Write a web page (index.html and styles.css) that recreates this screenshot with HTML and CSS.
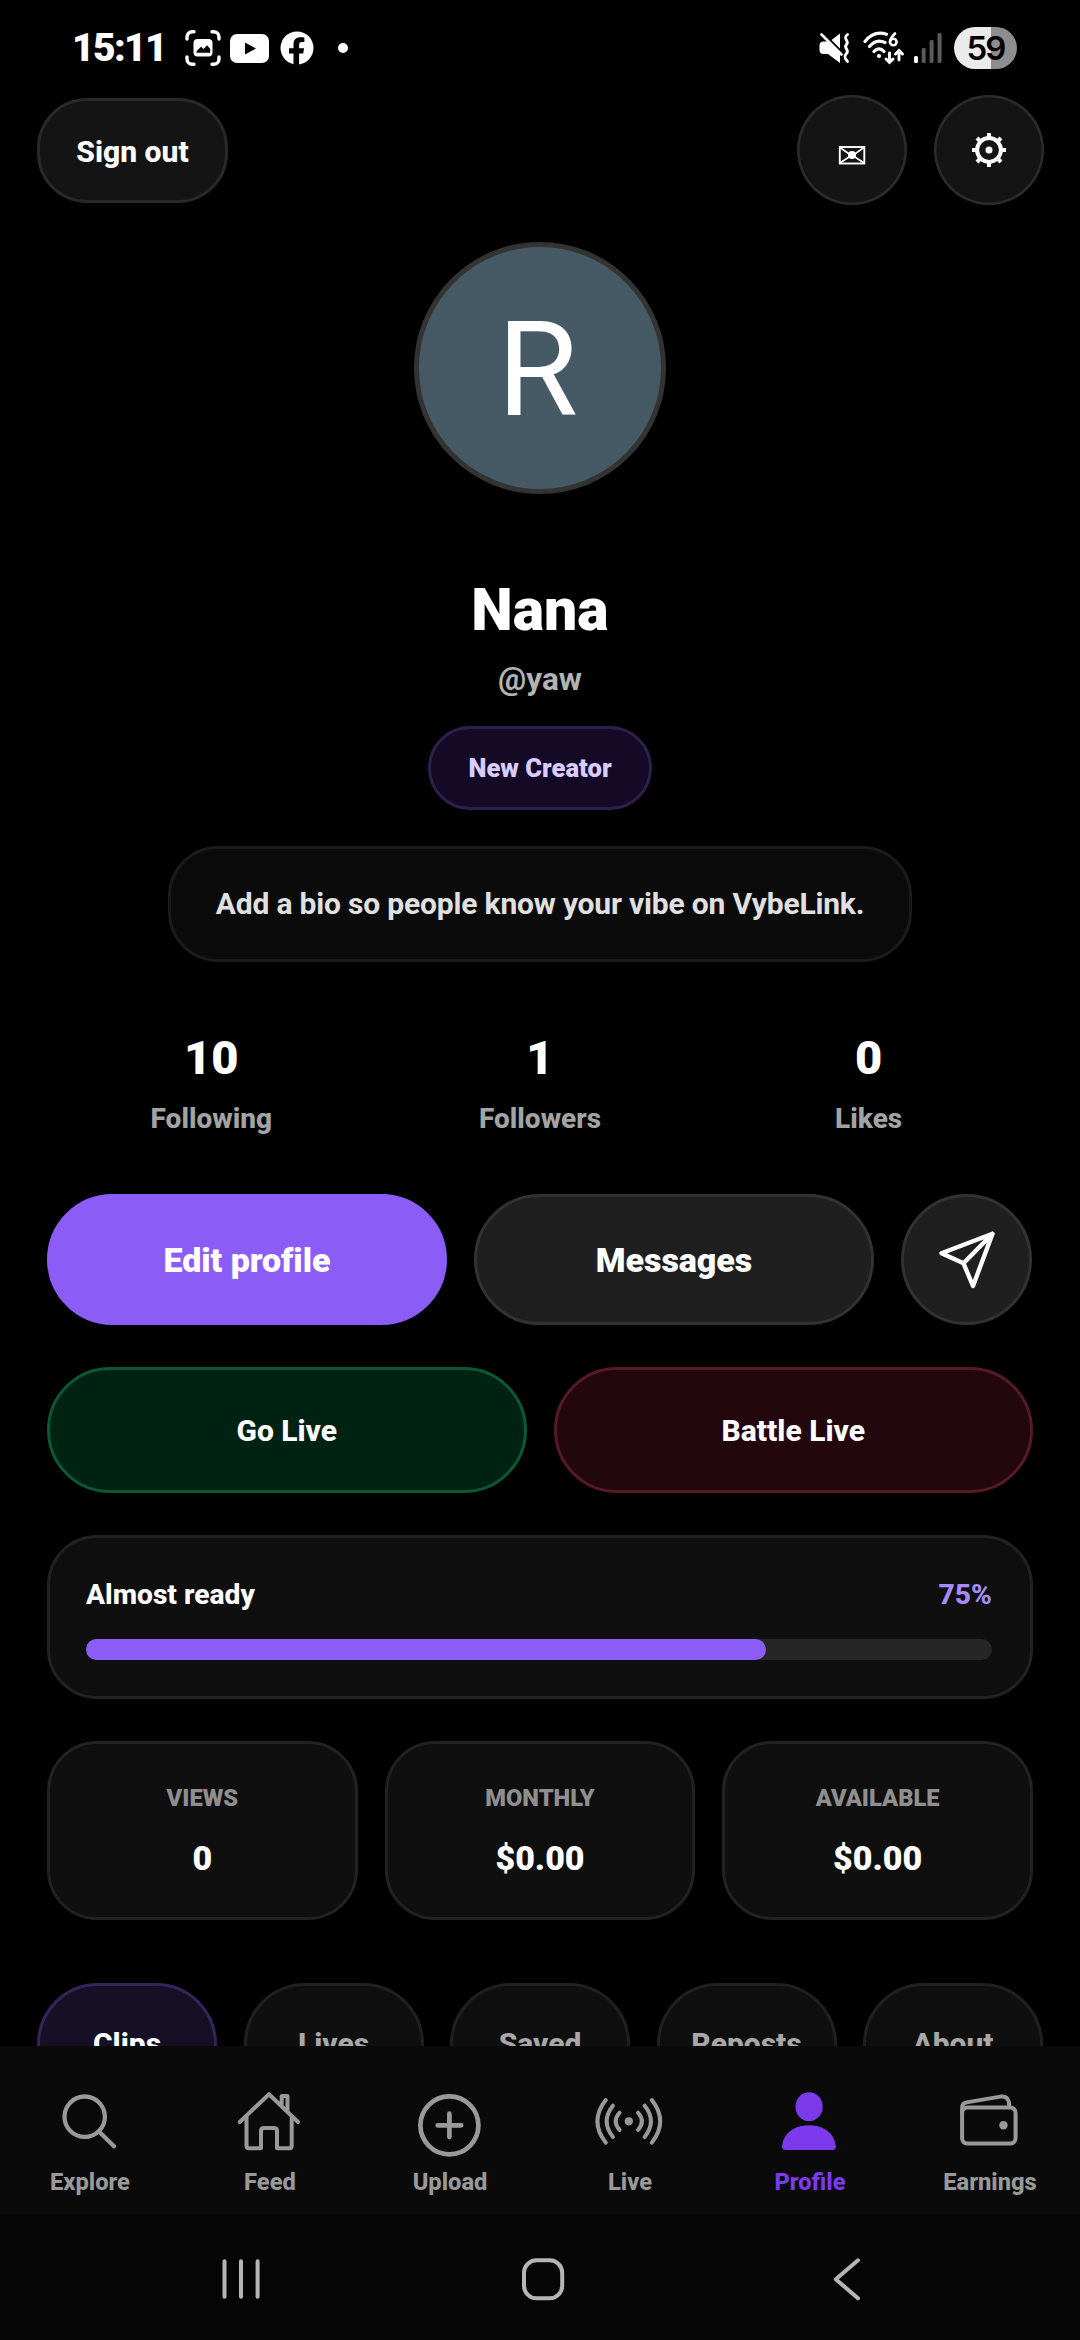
FILE: index.html
```html
<!DOCTYPE html>
<html lang="en">
<head>
<meta charset="utf-8">
<title>VybeLink – Profile</title>
<link rel="stylesheet" href="styles.css">
</head>
<body>
<div class="screen">
  <div class="status">
    <div class="status-left">
      <span class="clock">15:11</span>
      <svg class="ic-shot" width="36" height="36" viewBox="0 0 36 36" fill="none" stroke="#fff" stroke-width="3.4" stroke-linecap="round"><path d="M2 9V7a5.300 5.300 0 0 1 5.300-5.300H9M27 1.700h1.700A5.300 5.300 0 0 1 34 7v2M34 27v2a5.300 5.300 0 0 1-5.300 5.300H27M9 34.300H7.300A5.300 5.300 0 0 1 2 29v-2"/><rect x="8.500" y="9" width="19" height="17.500" rx="4" fill="#fff" stroke="none"/><path d="M11.500 22.800v-1.500l4.500-4.500 2.500 2.300 3.700-3.900 3 3.800v3.800z" fill="#000" stroke="none"/></svg>
      <svg class="ic-yt" width="39" height="29" viewBox="0 0 39 29"><rect width="39" height="29" rx="7" fill="#fff"/><path d="M15 8.500 26 14.500 15 20.500z" fill="#000"/></svg>
      <svg class="ic-fb" width="34" height="34" viewBox="0 0 34 34"><circle cx="17" cy="17" r="16.500" fill="#fff"/><path d="M13.500 35V22.500H9V17.200h4.500v-3.700c0-5 2.800-7.300 7-7.300 1.500 0 2.700.1 3.900.3v4.400h-2.300c-2.300 0-3 1.100-3 2.800v3.500h5l-.9 5.300h-4.100V35z" fill="#000"/></svg>
      <span class="dot"></span>
    </div>
    <div class="status-right">
      <svg class="ic-mute" width="32" height="32" viewBox="0 0 32 32" fill="none"><path d="M.500 13.500a4 4 0 0 1 4-4h5L21 20.500v10.500L9 22H4.500a4 4 0 0 1-4-4zM21 1.500v15L12.500 8z" fill="#fff"/><path d="M2.500 2.500 22.500 22.500" stroke="#fff" stroke-width="2.600" stroke-linecap="round"/><path d="M28.500 2.500C23 7 31 9 27.500 12.500S31 18 27.500 21.500 27 27 28.500 29.500" stroke="#fff" stroke-width="2.900" stroke-linecap="round"/></svg>
      <svg class="ic-wifi" width="42" height="34" viewBox="0 0 42 34" fill="none" stroke="#fff" stroke-width="3.200" stroke-linecap="round"><path d="M2 10.500C8 3 16 .800 23.500 3.300M6.500 15.500c4-5 9.500-6.800 15.500-4M11 20.500c3-3.500 7-3.500 10 0"/><circle cx="16" cy="25" r="2.100" fill="#fff" stroke="none"/><path d="M32 2.500c-3 3-5 5.500-5 8.500" stroke-width="2.600"/><circle cx="30.300" cy="11" r="3.300" stroke-width="2.600"/><path d="M26.500 22v9M23 28l3.500 3.500L30 28M36 29v-9M32.500 23 36 19.500l3.500 3.500" stroke-width="2.900"/></svg>
      <svg class="ic-signal" width="28" height="30" viewBox="0 0 28 30"><rect y="23" width="4" height="7" rx="1.500" fill="#fff"/><g fill="#5a5a5a"><rect x="7.700" y="15" width="4" height="15" rx="1.500"/><rect x="15.600" y="7" width="4" height="23" rx="1.500"/><rect x="23.600" width="4" height="30" rx="1.500"/></g></svg>
      <span class="battery">59</span>
    </div>
  </div>

  <main class="content">
    <header class="top">
      <div class="btn signout">Sign out</div>
      <div class="top-actions">
        <div class="round"><svg width="110" height="110" viewBox="0 0 110 110" fill="none" stroke="#fff"><rect x="42.800" y="52" width="24.500" height="16.500" stroke-width="1.900"/><path d="m43 52.500 12 8.500 12-8.500M43 68l12-8 12 8" stroke-width="1.700"/><circle cx="55" cy="60" r="4" fill="#fff" stroke="none"/></svg></div>
        <div class="round"><svg width="110" height="110" viewBox="0 0 110 110" fill="none" stroke="#fff" stroke-width="4"><circle cx="55" cy="55" r="11.900"/><circle cx="55" cy="55" r="3.500" fill="#fff" stroke="none"/><path d="M55 42v-4M55 68v4M42 55h-4M68 55h4M46 46l-3-3M64 46l3-3M46 64l-3 3M64 64l3 3"/></svg></div>
      </div>
    </header>

    <section class="identity">
      <div class="avatar">R</div>
      <h1 class="name">Nana</h1>
      <div class="handle">@yaw</div>
      <div class="badge">New Creator</div>
      <div class="bio">Add a bio so people know your vibe on VybeLink.</div>
    </section>

    <section class="stats">
      <div><b>10</b><span>Following</span></div>
      <div><b>1</b><span>Followers</span></div>
      <div><b>0</b><span>Likes</span></div>
    </section>

    <section class="actions">
      <div class="btn primary">Edit profile</div>
      <div class="btn grey">Messages</div>
      <div class="btn grey send"><svg width="60" height="60" viewBox="0 0 60 60" fill="none" stroke="#fff" stroke-width="4.400" stroke-linejoin="round" stroke-linecap="round"><path d="M55.500 3.800 4.500 23.200 26.500 33.300 36 56zM26.500 33.300l29-29.500"/></svg></div>
    </section>

    <section class="lives">
      <div class="btn golive">Go Live</div>
      <div class="btn battle">Battle Live</div>
    </section>

    <section class="card progress">
      <div class="progress-head"><span>Almost ready</span><span class="pct">75%</span></div>
      <div class="track"><div class="fill" style="width:75%"></div></div>
    </section>

    <section class="metrics">
      <div class="card metric"><span>VIEWS</span><b>0</b></div>
      <div class="card metric"><span>MONTHLY</span><b>$0.00</b></div>
      <div class="card metric"><span>AVAILABLE</span><b>$0.00</b></div>
    </section>

    <section class="tabs">
      <div class="tab active">Clips</div>
      <div class="tab">Lives</div>
      <div class="tab">Saved</div>
      <div class="tab">Reposts</div>
      <div class="tab">About</div>
    </section>
  </main>

  <nav class="nav">
    <div class="item"><svg viewBox="0 0 72 76" stroke-width="4.300"><circle cx="30.700" cy="32.700" r="20.200"/><path d="M45.200 47.700 60 62.300"/></svg>Explore</div>
    <div class="item"><svg viewBox="0 0 72 76" stroke-width="4"><path d="M5.800 38 35 10.200 64 38M12.500 32.500v29.300q0 2.500 2.500 2.500h12V47q0-3 3-3h10q3 0 3 3v17.300h12.200q2.500 0 2.500-2.500V32.500M47.700 20V12h5.800v15"/></svg>Feed</div>
    <div class="item"><svg viewBox="0 0 72 76" stroke-width="4.700"><circle cx="35.400" cy="41.300" r="29"/><path d="M23.700 41.300h23.500M35.400 29.500v23.600"/></svg>Upload</div>
    <div class="item"><svg viewBox="0 0 72 76" stroke-width="4"><circle cx="34.800" cy="37.300" r="4.100" fill="currentColor" stroke="none"/><path d="M57.900 16q16.600 21.300 0 42.600M50.700 21.700q12.500 15.600 0 31.200M44.100 28.700q7.600 8.600 0 17.200M11.700 16q-16.600 21.300 0 42.600M18.900 21.700q-12.500 15.600 0 31.200M25.500 28.700q-7.600 8.600 0 17.200"/></svg>Live</div>
    <div class="item active"><svg viewBox="0 0 72 76"><g fill="currentColor" stroke="none"><ellipse cx="35.100" cy="22.700" rx="13.600" ry="14.400"/><path d="M8 62.500C9 49.500 20 41.200 35 41.200s25.800 8.300 26.800 21.300q0 3.500-3.500 3.500H11.500Q8 66 8 62.500z"/></g></svg>Profile</div>
    <div class="item"><svg viewBox="0 0 72 76" stroke-width="4"><rect x="8.100" y="23.400" width="53.500" height="36.200" rx="5.500"/><path d="M8.100 28v-4q0-5 4.400-5.600L46.500 12.600q7-.9 8.400 5.400l.4 4.500"/><circle cx="49.500" cy="41.300" r="4.200" fill="currentColor" stroke="none"/></svg>Earnings</div>
  </nav>

  <div class="sysbar">
    <svg class="recents" width="42" height="48" viewBox="0 0 42 48"><path d="M4.500 6.300v35.500M21 6.300v35.500M37.600 6.300v35.500"/></svg>
    <svg class="home" width="48" height="48" viewBox="0 0 48 48"><rect x="5" y="5.300" width="38.200" height="38" rx="12.500"/></svg>
    <svg class="back" width="42" height="48" viewBox="0 0 42 48"><path d="M33 5.300 10.800 24.300 33 43.300"/></svg>
  </div>
</div>
</body>
</html>
```
FILE: styles.css
```css
* { box-sizing: border-box; }
body {
  margin: 0;
  background: #000;
  color: #fff;
  font-family: Roboto, "Noto Sans", sans-serif;
  font-weight: 800;
}
svg { display: block; flex: none; }
.screen {
  width: 1080px;
  height: 2340px;
  overflow: hidden;
  display: flex;
  flex-direction: column;
}

/* Status bar */
.status {
  height: 95px;
  flex: none;
  display: flex;
  justify-content: space-between;
  padding: 0 63px 0 72px;
}
.status-left, .status-right { display: flex; align-items: center; height: 96px; }
.clock { font-size: 39px; font-weight: 900; width: 113px; line-height: 44px; letter-spacing: -1.600px; }
.ic-yt { margin-left: 9px; }
.ic-fb { margin-left: 11px; }
.dot { width: 10px; height: 10px; border-radius: 50%; background: #fff; margin-left: 24px; }
.ic-wifi { margin-left: 12px; }
.ic-signal { margin-left: 9px; }
.battery {
  width: 63px;
  height: 42px;
  margin-left: 12px;
  border-radius: 21px;
  background: linear-gradient(90deg, #ebebeb 37px, #8d8d8d 37px);
  color: #000;
  font: 600 33px/43px Inter, sans-serif;
  letter-spacing: -2px;
  text-align: center;
}

/* Content */
.content { flex: 1; min-height: 0; overflow: hidden; }
.btn {
  display: flex;
  align-items: center;
  justify-content: center;
  border: 3px solid transparent;
}
.top { display: flex; justify-content: space-between; align-items: center; height: 110px; padding: 0 36.500px 0 37px; }
.signout { width: 191px; height: 105px; padding-top: 2px; border-radius: 50px; background: #141414; border-color: #292929; font-size: 30px; }
.top-actions { display: flex; gap: 27px; }
.round { width: 110px; height: 110px; border-radius: 50%; background: #141414; box-shadow: inset 0 0 0 2.500px #2b2b2b; }

.identity { display: flex; flex-direction: column; align-items: center; padding-top: 37px; }
.avatar {
  width: 252px;
  height: 252px;
  padding-right: 5px;
  border-radius: 50%;
  border: 5px solid #333;
  background: #465a65;
  font-size: 131px;
  font-weight: 450;
  line-height: 247px;
  text-align: center;
}
.name { margin: 81px 0 0; font-size: 59px; line-height: 70px; font-weight: 900; }
.handle { margin-top: 16px; font-size: 31.500px; line-height: 38px; color: #b3b3b3; font-weight: 750; }
.badge {
  margin-top: 27px;
  width: 224px;
  height: 84px;
  border-radius: 42px;
  border: 3px solid #2e1f4d;
  background: #140a26;
  color: #d9ccff;
  font-size: 25.600px;
  font-weight: 900;
  line-height: 79px;
  text-align: center;
}
.bio {
  margin-top: 36px;
  width: 744px;
  height: 116px;
  border-radius: 50px;
  border: 3px solid #1b1b1b;
  background: #0b0b0b;
  color: #e0e0e0;
  font-size: 30px;
  font-weight: 750;
  letter-spacing: -.180px;
  line-height: 110px;
  text-align: center;
  white-space: nowrap;
}
.stats { display: grid; grid-template-columns: repeat(3, 1fr); padding: 68px 47px 0; text-align: center; }
.stats b { display: block; font-size: 47px; line-height: 56px; font-weight: 900; }
.stats span { display: block; margin-top: 16px; margin-bottom: -1px; font-size: 28px; line-height: 34px; font-weight: 780; color: #a3a3a3; }

.actions { display: flex; gap: 27px; padding: 59px 48px 0 47px; }
.actions .btn { height: 131px; flex: 1; border-radius: 66px; font-size: 34px; font-weight: 900; letter-spacing: -.050px; }
.actions .primary { background: #8b5cf6; border-color: #8b5cf6; }
.actions .grey { background: #1f1f1f; border-color: #323232; }
.actions .send { flex: 0 0 131px; }
.lives { display: flex; gap: 27px; padding: 42px 47px 0; }
.lives .btn { flex: 1; height: 126px; border-radius: 63px; font-size: 30px; }
.lives .golive { background: #002212; border-color: #0a5835; }
.lives .battle { background: #22070d; border-color: #571926; }

.card { background: #0f0f0f; border: 3px solid #222; border-radius: 50px; }
.progress { margin: 42px 47px 0; height: 164px; padding: 40px 38px 0 36px; font-size: 28.200px; line-height: 34px; }
.progress-head { display: flex; justify-content: space-between; }
.pct { color: #a78bfa; }
.track { margin-top: 27px; height: 21px; border-radius: 10.500px; background: #262626; }
.fill { height: 100%; border-radius: 10.500px; background: #8b5cf6; }
.metrics { display: grid; grid-template-columns: repeat(3, 1fr); gap: 27px; padding: 42px 47px 0; text-align: center; }
.metric { height: 179px; padding-top: 40px; }
.metric span { display: block; font-size: 23.700px; line-height: 28px; font-weight: 900; color: #8f8f8f; }
.metric b { display: block; margin-top: 26px; font-size: 34px; line-height: 40px; font-weight: 900; }
.tabs { display: grid; grid-template-columns: repeat(5, 1fr); gap: 26.500px; padding: 63px 37px 0; }
.tab {
  height: 122px;
  border-radius: 61px;
  border: 3px solid #202020;
  background: #0f0f0f;
  color: #a8a8a8;
  font-size: 30px;
  line-height: 116px;
  text-align: center;
}
.tab.active { background: #161026; border-color: #35245b; color: #fff; }

/* Bottom navigation */
.nav {
  flex: none;
  height: 168px;
  display: grid;
  grid-template-columns: repeat(6, 1fr);
  background: #0a0a0a;
  color: #999;
}
.item { display: flex; flex-direction: column; align-items: center; gap: 8px; padding-top: 38px; font-size: 23.700px; line-height: 28px; font-weight: 800; }
.item svg { width: 72px; height: 76px; fill: none; stroke: currentColor; stroke-linecap: round; stroke-linejoin: round; }
.item.active { color: #7c3aed; }
.sysbar { flex: none; height: 126px; background: #050505; display: flex; padding-top: 41px; }
.sysbar svg { fill: none; stroke: #b5b5b5; stroke-width: 4; stroke-linecap: round; stroke-linejoin: round; }
.recents { margin-left: 220px; }
.home { margin-left: 257px; }
.back { margin-left: 258px; }
```
